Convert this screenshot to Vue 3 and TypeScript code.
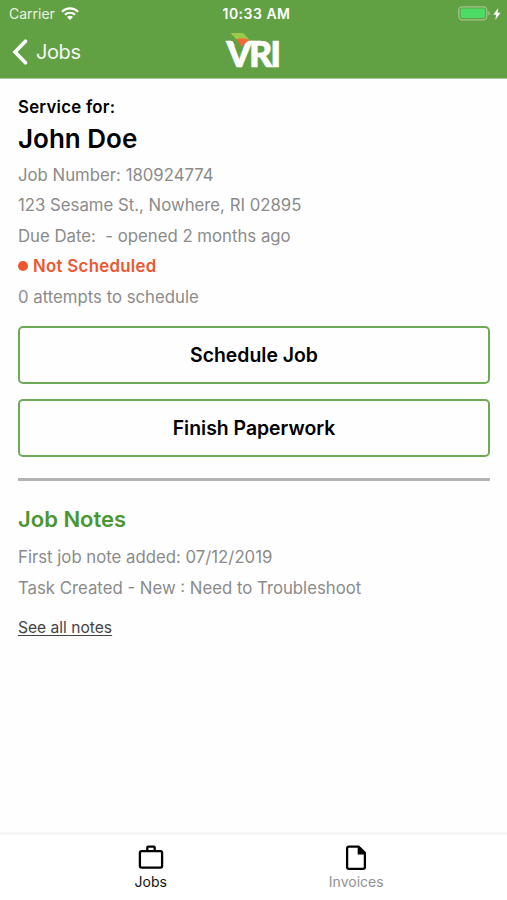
<script setup lang="ts">
import { ref } from 'vue'

type TabId = 'jobs' | 'invoices'

const activeTab = ref<TabId>('jobs')

const job = {
  customer: 'John Doe',
  number: '180924774',
  address: '123 Sesame St., Nowhere, RI 02895',
  due: '\u00a0- opened 2 months ago',
  status: 'Not Scheduled',
  attempts: 0,
}
</script>

<template>
  <div class="screen">
    <header class="header">
      <div class="status-bar">
        <div class="carrier">
          <span>Carrier</span>
          <svg class="wifi" viewBox="0 0 18 13" width="18" height="13">
            <path d="M1 4.700C5.500.2 12.500.2 17 4.700" fill="none" stroke="#fff" stroke-width="2.300" />
            <path d="M3.900 7.800c2.900-2.800 7.300-2.800 10.200 0" fill="none" stroke="#fff" stroke-width="2.100" />
            <path d="M6 10q3-2.500 6 0L9 13z" fill="#fff" />
          </svg>
        </div>
        <span class="clock">10:33 AM</span>
        <div class="power">
          <svg viewBox="0 0 32 15" width="32" height="15">
            <rect x=".8" y=".8" width="28" height="13" rx="3.500" fill="none" stroke="#a1c589" stroke-width="1.300" />
            <rect x="2.600" y="2.500" width="24.400" height="9.600" rx="1.500" fill="#4cdb64" />
            <path d="M30.300 5v4.600q1.600-.9 1.600-2.300T30.300 5z" fill="#a1c589" />
          </svg>
          <svg viewBox="0 0 8 12" width="8" height="12">
            <path d="M5.200 0 .3 6.800h2.900L2.300 12l5.300-7.200H4.600z" fill="#fff" />
          </svg>
        </div>
      </div>
      <div class="nav-bar">
        <button class="back" type="button">
          <svg viewBox="0 0 16 26" width="16" height="26">
            <path d="M13.500 2.200 3 13l10.500 10.800" fill="none" stroke="#fff" stroke-width="3.600" stroke-linecap="round" />
          </svg>
          <span>Jobs</span>
        </button>
        <svg class="logo" viewBox="0 0 72 50" width="72" height="50">
          <text class="logo-text" x="8.500 31 52.200" y="39.700">VRI</text>
          <path d="M7.500 14H14l3 4.500H10.500z" fill="#fff" />
          <path d="M12.500 6H25l6.500 6.800-9.500-.8L18 12z" fill="#9ccb4b" />
          <path d="M18.500 12Q26 10 31.500 13L27 16.500 23.500 20z" fill="#ef6b3a" />
        </svg>
      </div>
    </header>

    <main class="content">
      <p class="eyebrow">Service for:</p>
      <h1 class="customer">{{ job.customer }}</h1>
      <div class="details">
        <p class="number">Job Number: {{ job.number }}</p>
        <p class="address">{{ job.address }}</p>
        <p class="due">Due Date: {{ job.due }}</p>
        <p class="status"><i class="dot"></i>{{ job.status }}</p>
        <p class="attempts">{{ job.attempts }} attempts to schedule</p>
      </div>
      <div class="actions">
        <button class="action" type="button">Schedule Job</button>
        <button class="action" type="button">Finish Paperwork</button>
      </div>
      <section class="notes">
        <h2>Job Notes</h2>
        <p>First job note added: 07/12/2019</p>
        <p>Task Created - New : Need to Troubleshoot</p>
        <a class="see-all" href="#">See all notes</a>
      </section>
    </main>

    <nav class="tabs">
      <button class="tab" type="button" :class="{ active: activeTab === 'jobs' }" @click="activeTab = 'jobs'">
        <svg viewBox="0 0 26 26" width="26" height="26">
          <rect x="1.900" y="7.100" width="22.200" height="16.600" rx="1.600" fill="none" stroke="#000" stroke-width="2.300" />
          <path d="M9.300 6.900V3.600q0-1 1-1h5.400q1 0 1 1v3.300" fill="none" stroke="#000" stroke-width="2.300" />
        </svg>
        <span>Jobs</span>
      </button>
      <button class="tab" type="button" :class="{ active: activeTab === 'invoices' }" @click="activeTab = 'invoices'">
        <svg viewBox="0 0 26 26" width="26" height="26">
          <path d="M5.900 2.700h9.900l6.100 6.100v14.200q0 1.800-1.800 1.800H5.900q-1.800 0-1.800-1.800V4.500q0-1.800 1.800-1.800z" fill="none" stroke="#000" stroke-width="2.300" stroke-linejoin="round" />
          <path d="M14.700 2.500v7.900h8z" fill="#000" />
        </svg>
        <span>Invoices</span>
      </button>
    </nav>
  </div>
</template>

<style>
body {
  background: #fff;
}
</style>

<style scoped>
.screen {
  display: flex;
  flex-direction: column;
  width: 100%;
  height: 900px;
  overflow: hidden;
  background: #fefefe;
  color: #000;
  font-family: Inter, "Liberation Sans", sans-serif;
}

p,
h1,
h2 {
  margin: 0;
}

button {
  padding: 0;
  border: 0;
  background: none;
  color: inherit;
  font: inherit;
}

svg {
  display: block;
  flex: none;
}

.header {
  box-sizing: border-box;
  height: 79px;
  flex: none;
  background: #62a044;
  border-bottom: 1px solid #a9cb98;
  color: #fff;
}

.status-bar {
  display: grid;
  grid-template-columns: 1fr auto 1fr;
  align-items: center;
  height: 27px;
  padding: 0 6px 0 9px;
}

.carrier {
  display: flex;
  align-items: center;
  gap: 6px;
  font-size: 14px;
  color: #e9f3e3;
}

.clock {
  font-size: 14px;
  font-weight: 600;
  letter-spacing: 0.5px;
  padding-left: 3px;
}

.power {
  display: flex;
  align-items: center;
  justify-content: flex-end;
  gap: 3px;
}

.nav-bar {
  display: grid;
  grid-template-columns: 1fr auto 1fr;
  align-items: center;
  height: 50px;
  padding: 0 12px;
}

.back {
  display: flex;
  align-items: center;
  gap: 8px;
  font-size: 20px;
  letter-spacing: -0.4px;
  color: #f3f8f0;
}

.logo {
  overflow: visible;
}

.logo-text {
  font-family: Lato, Inter, sans-serif;
  font-size: 36px;
  font-weight: 900;
  fill: #fff;
  stroke: #fff;
  stroke-width: 0.7px;
}

.content {
  flex: 1;
  padding: 16.5px 17px 0 18px;
  font-size: 16.750px;
}

.eyebrow {
  font-size: 16.800px;
  font-weight: 600;
  letter-spacing: 0.25px;
  line-height: 22px;
}

.customer {
  font-size: 26px;
  font-weight: 600;
  line-height: 42px;
}

.details {
  color: #8b8b8b;
  line-height: 30.5px;
}

.status {
  display: flex;
  align-items: center;
  gap: 5px;
  color: #ee5630;
  font-weight: 600;
  letter-spacing: 0.33px;
}

.dot {
  width: 10px;
  height: 10px;
  border-radius: 50%;
  background: currentColor;
}

.actions {
  display: flex;
  flex-direction: column;
  gap: 15px;
  padding: 14px 0 21px;
  border-bottom: 3px solid #b3b3b3;
}

.action {
  height: 58px;
  border: 2px solid #6eaa56;
  border-radius: 5px;
  font-size: 19.400px;
  font-weight: 600;
}

.notes {
  padding-top: 21.5px;
  color: #8b8b8b;
  line-height: 30.5px;
}

.notes h2 {
  margin-bottom: 7.5px;
  font-size: 22px;
  font-weight: 600;
  line-height: 32px;
  color: #4c962f;
}

.see-all {
  display: inline-block;
  margin-top: 9.5px;
  font-size: 15.600px;
  color: #444;
  text-underline-offset: 2px;
}

.tabs {
  display: grid;
  grid-template-columns: 1fr 1fr;
  box-sizing: border-box;
  height: 68px;
  flex: none;
  padding: 9px 48px 0;
  border-top: 3px solid #f6f6f6;
  background: #fff;
}

.tab {
  display: flex;
  flex-direction: column;
  align-items: center;
  font-size: 14px;
  line-height: 24px;
  color: #929292;
}

.tab.active {
  color: #111;
}
</style>
